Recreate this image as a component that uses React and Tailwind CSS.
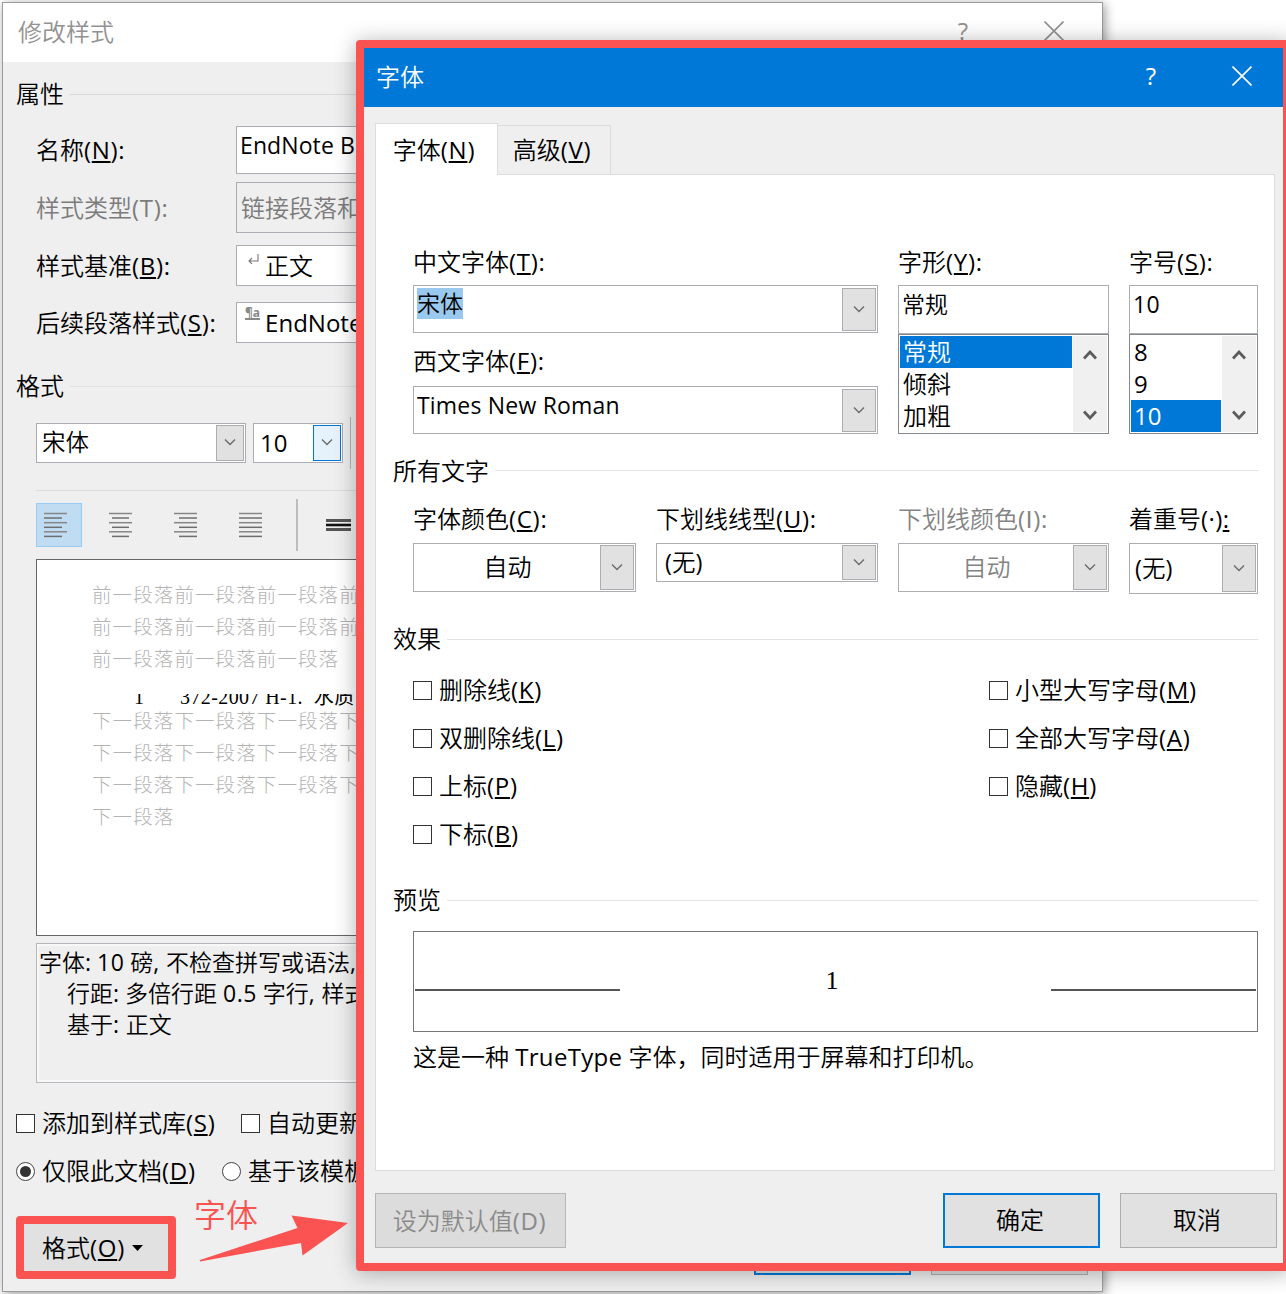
import { clsx } from "clsx"

const alignIcons = [
    { name: "left", short: [0, 18] },
    { name: "center", short: [3, 20] },
    { name: "right", short: [5, 23] },
    { name: "justify", short: [0, 23] },
]

const leftEffects = [
    ["删除线", "K"],
    ["双删除线", "L"],
    ["上标", "P"],
    ["下标", "B"],
]

const rightEffects = [
    ["小型大写字母", "M"],
    ["全部大写字母", "A"],
    ["隐藏", "H"],
]

function Hot({ text, letter, colon = true, plain }) {
    return (
        <span className="whitespace-nowrap">
            {text}
            <span className="font-normal tracking-[0.7px]">
                (<span className={clsx(!plain && "underline decoration-[1.5px] underline-offset-2", letter == "I" && "font-['Liberation_Sans',sans-serif]")}>{letter}</span>){colon && ":"}
            </span>
        </span>
    )
}

function Chevron({ up, bold }) {
    return (
        <svg width="14" height="10" viewBox="0 0 14 10" fill="none" stroke={bold ? "#5c5c5c" : "#6b6b6b"} strokeWidth={bold ? 2.8 : 1.4}>
            <path d={up ? "M1 8.5 L7 2 L13 8.5" : bold ? "M1 1.5 L7 8 L13 1.5" : "M2 2.5 L7 7.5 L12 2.5"} />
        </svg>
    )
}

function DropButton({ active, className }) {
    return (
        <div className={clsx("flex shrink-0 items-center justify-center border pb-[2px]", active ? "border-[#0078d7] bg-[#e5f1fb]" : "border-[#adadad] bg-[#e1e1e1]", className)}>
            <Chevron />
        </div>
    )
}

function Section({ title, className, line = "bg-[#e2e2e2]" }) {
    return (
        <div className={clsx("flex items-center gap-[6px]", className)}>
            <span className="whitespace-nowrap">{title}</span>
            <div className={clsx("h-px flex-1", line)} />
        </div>
    )
}

function Check({ text, letter }) {
    return (
        <div className="flex h-6 items-center gap-[7px]">
            <div className="h-[19px] w-[19px] shrink-0 border-[1.5px] border-[#333] bg-white" />
            <Hot text={text} letter={letter} colon={false} />
        </div>
    )
}

function AlignIcon({ short }) {
    return (
        <svg width="23" height="26" viewBox="0 0 23 26" strokeWidth="1.5">
            {[1.5, 6, 10.7, 15.3, 19.8, 24.4].map((y, i) => (
                <line key={y} x1={i % 2 ? short[0] : 0} x2={i % 2 ? short[1] : 23} y1={y} y2={y} stroke={i % 2 ? "#6e6e6e" : "#868686"} />
            ))}
        </svg>
    )
}

function CloseIcon({ color }) {
    return (
        <svg width="20" height="20" viewBox="0 0 20 20" stroke={color} strokeWidth="1.6">
            <path d="M0.5 0.5 L19.5 19.5 M19.5 0.5 L0.5 19.5" />
        </svg>
    )
}

function ListBox({ items, selected, className }) {
    return (
        <div className={clsx("flex h-[100px] border border-[#828790] bg-white p-px", className)}>
            <div className="flex-1">
                {items.map(item => (
                    <div key={item} className={clsx("flex h-8 items-center pl-[3px]", item == selected && "bg-[#0078d7] text-white")}>{item}</div>
                ))}
            </div>
            <div className="ml-px flex w-[34px] flex-col items-center justify-between bg-[#f0f0f0] pb-3 pt-[14px]">
                <Chevron up bold />
                <Chevron bold />
            </div>
        </div>
    )
}

function StyleDialog() {
    return (
        <div className="absolute left-[2px] top-[2px] h-[1290px] w-[1101px] border border-[#9b9b9b] bg-[#efefef] shadow-[2px_2px_10px_rgba(0,0,0,0.4)]">
            <div className="flex h-[59px] items-center bg-white pl-[15px] text-[#929292]">
                <span className="flex-1 pb-px">修改样式</span>
                <span className="mr-[76px] pb-1 font-normal">?</span>
                <span className="mr-[38px] pb-1"><CloseIcon color="#929292" /></span>
            </div>

            <div className="w-[500px] pl-[13px]">
                <Section title="属性" className="h-16" line="bg-[#d9d9d9]" />
                <div className="flex flex-col pl-5">
                    <div className="flex h-12 items-center">
                        <div className="w-[200px] shrink-0"><Hot text="名称" letter="N" /></div>
                        <div className="h-full flex-1 whitespace-nowrap border border-[#abadb3] bg-white pl-[3px] text-[23px] font-normal leading-[37px] tracking-[0.1px]">EndNote Bi</div>
                    </div>
                    <div className="mt-2 flex h-[51px] items-center text-[#7b7b7b]">
                        <div className="w-[200px] shrink-0"><Hot text="样式类型" letter="T" plain /></div>
                        <div className="flex h-full flex-1 items-center whitespace-nowrap border border-[#abadb3] pl-1 text-[24px]">链接段落和</div>
                    </div>
                    <div className="mt-3 flex h-[41px] items-center">
                        <div className="w-[200px] shrink-0"><Hot text="样式基准" letter="B" /></div>
                        <div className="flex h-full flex-1 items-center border border-[#abadb3] bg-white pl-[11px]">
                            <svg className="mb-[14px] mr-[6px]" width="11" height="10" viewBox="0 0 11 10" fill="none" stroke="#777" strokeWidth="1.1">
                                <path d="M10 0 V7 H1 M4 4 L1 7 L4 10" />
                            </svg>
                            正文
                        </div>
                    </div>
                    <div className="mt-4 flex h-[41px] items-center">
                        <div className="w-[200px] shrink-0"><Hot text="后续段落样式" letter="S" /></div>
                        <div className="flex h-full flex-1 items-center whitespace-nowrap border border-[#abadb3] bg-white pl-2 font-normal">
                            <span className="mb-[18px] mr-[5px] border-b-2 border-[#888] text-[12px] font-bold leading-[11px] text-[#888]">¶a</span>
                            EndNote
                        </div>
                    </div>
                </div>

                <Section title="格式" className="h-20 pt-[6px]" />
                <div className="flex flex-col pl-5">
                    <div className="flex h-10 items-center">
                        <div className="flex h-full w-[210px] items-center justify-between border border-[#abadb3] bg-white p-px pl-[5px] text-[23.5px]">
                            宋体
                            <DropButton className="h-full w-7" />
                        </div>
                        <div className="ml-[7px] flex h-full w-[90px] items-center justify-between border border-[#abadb3] bg-white p-px pl-[6px] font-normal">
                            10
                            <DropButton active className="h-full w-7" />
                        </div>
                        <div className="ml-[7px] h-[52px] w-px shrink-0 bg-[#b5b5b5]" />
                    </div>
                    <div className="mt-[27px] h-px bg-[#dcdcdc]" />
                    <div className="mt-[11px] flex h-[45px] items-center">
                        {alignIcons.map((icon, i) => (
                            <div key={icon.name} className={clsx("mr-[19px] flex h-[44px] w-[46px] items-center border pl-[7px]", i == 0 ? "border-[#99ccf3] bg-[#c0dcf3]" : "border-transparent")}>
                                <AlignIcon short={icon.short} />
                            </div>
                        ))}
                        <div className="h-[52px] w-[2px] bg-[#bdbdbd]" />
                        <svg className="ml-7" width="25" height="12" viewBox="0 0 25 12">
                            <path d="M0 1.5 H25 M0 10.5 H25" stroke="#555" strokeWidth="3" />
                            <path d="M0 6 H25" stroke="#111" strokeWidth="2.6" />
                        </svg>
                    </div>

                    <div className="mt-3 h-[377px] whitespace-nowrap border border-[#666] bg-white pl-[55px] pt-5 font-['Liberation_Serif','Noto_Sans_CJK_SC',serif] text-[19.5px] font-light leading-8 tracking-[1.1px] text-[#b4b4b4]">
                        <p>前一段落前一段落前一段落前</p>
                        <p>前一段落前一段落前一段落前</p>
                        <p>前一段落前一段落前一段落</p>
                        <div className="-mb-[2px] mt-[18px] flex h-[14px] items-end overflow-hidden pl-[42px] font-normal text-[20px] tracking-[0.4px] text-black">
                            <span className="h-[22px] w-[46px] leading-[22px]">1</span>
                            <span className="h-[22px] leading-[22px]">372-2007 H-1.&nbsp; 水质</span>
                        </div>
                        <p>下一段落下一段落下一段落下</p>
                        <p>下一段落下一段落下一段落下</p>
                        <p>下一段落下一段落下一段落下</p>
                        <p>下一段落</p>
                    </div>

                    <div className="mt-[7px] h-[140px] whitespace-nowrap border border-[#b5b7bd] pl-[2px] pt-[3px] text-[23px] leading-[31px] shadow-[inset_0_0_0_2px_#f8f8f8]">
                        <p>字体<span className="font-normal">: <span className="tracking-[0.5px]">10</span></span> 磅<span className="font-normal tracking-[0.4px]">, </span>不检查拼写或语法<span className="font-normal">,</span></p>
                        <p className="pl-7">行距<span className="font-normal">: </span>多倍行距 <span className="font-normal tracking-[0.5px]">0.5</span> 字行<span className="font-normal tracking-[0.4px]">, </span>样式</p>
                        <p className="pl-7">基于<span className="font-normal tracking-[0.4px]">: </span>正文</p>
                    </div>
                </div>

                <div className="mt-7 flex whitespace-nowrap">
                    <div className="w-[225px]"><Check text="添加到样式库" letter="S" /></div>
                    <div className="flex h-6 items-center gap-[7px]">
                        <div className="h-[19px] w-[19px] border-[1.5px] border-[#333] bg-white" />
                        自动更新
                    </div>
                </div>
                <div className="mt-6 flex h-6 items-center whitespace-nowrap">
                    <div className="mr-[7px] flex h-[19px] w-[19px] items-center justify-center rounded-full border-[1.5px] border-[#444] bg-white">
                        <div className="h-[11px] w-[11px] rounded-full bg-[#333]" />
                    </div>
                    <div className="w-[180px]"><Hot text="仅限此文档" letter="D" colon={false} /></div>
                    <div className="mr-[7px] h-[19px] w-[19px] shrink-0 rounded-full border-[1.5px] border-[#444] bg-white" />
                    基于该模板
                </div>
                <div className="mt-[33px] flex">
                    <div className="flex h-[63px] w-[160px] items-center gap-[7px] rounded-[4px] border-8 border-[#fb5252] bg-[#e1e1e1] pl-[18px]">
                        <Hot text="格式" letter="O" colon={false} />
                        <svg width="11" height="6" viewBox="0 0 11 6"><path d="M0 0 H11 L5.5 6 Z" /></svg>
                    </div>
                </div>
            </div>
            <div className="absolute bottom-[16px] right-[14px] flex gap-5">
                <div className="h-[55px] w-[157px] border-2 border-[#0078d7] bg-[#e1e1e1]" />
                <div className="h-[55px] w-[157px] border border-[#adadad] bg-[#e1e1e1]" />
            </div>
        </div>
    )
}

function FontDialog() {
    return (
        <div className="absolute left-[356px] top-[40px] flex h-[1231px] w-[935px] flex-col rounded-[4px] border-8 border-[#fb5252] bg-[#efefef] shadow-[0_2px_22px_rgba(0,0,0,0.3)]">
            <div className="flex h-[59px] shrink-0 items-center bg-[#0078d7] pb-[3px] pl-3 text-white">
                <span className="flex-1 pt-px">字体</span>
                <span className="mr-[76px] font-normal">?</span>
                <span className="mr-[31px]"><CloseIcon color="#fff" /></span>
            </div>

            <div className="mt-4 flex h-[51px] items-end pl-[11px]">
                <div className="z-10 -mb-px flex h-[52px] w-[123px] items-center justify-center border border-b-0 border-[#dcdcdc] bg-white pr-[5px]"><Hot text="字体" letter="N" colon={false} /></div>
                <div className="flex h-[49px] w-[113px] items-center justify-center border border-b-0 border-l-0 border-[#dcdcdc] pr-1"><Hot text="高级" letter="V" colon={false} /></div>
            </div>

            <div className="ml-[11px] h-[997px] w-[900px] border border-[#dcdcdc] bg-white pl-[17px] pr-4">
                <div className="flex gap-5 pl-5 pt-[74px]">
                    <div className="w-[465px]">
                        <div className="flex h-[36px] items-center pb-[11px]"><Hot text="中文字体" letter="T" /></div>
                        <div className="flex h-12 justify-between border border-[#abadb3] p-px pl-[3px] pt-[2px]">
                            <span className="h-[31px] bg-[#99c9ef] text-[23px] leading-[30px]">宋体</span>
                            <DropButton className="h-[43px] w-[34px]" />
                        </div>
                        <div className="flex h-[53px] items-center pt-[3px]"><Hot text="西文字体" letter="F" /></div>
                        <div className="flex h-12 justify-between border border-[#abadb3] p-px pl-[3px] pt-[2px]">
                            <span className="text-[23px] font-normal leading-[33px] tracking-[0.2px]">Times New Roman</span>
                            <DropButton className="h-[43px] w-[34px]" />
                        </div>
                    </div>
                    <div className="w-[211px]">
                        <div className="flex h-[36px] items-center pb-[11px]"><Hot text="字形" letter="Y" /></div>
                        <div className="h-[49px] border border-[#abadb3] pl-[3px] text-[23px] leading-[37px]">常规</div>
                        <ListBox items={["常规", "倾斜", "加粗"]} selected="常规" />
                    </div>
                    <div className="w-[129px]">
                        <div className="flex h-[36px] items-center pb-[11px]"><Hot text="字号" letter="S" /></div>
                        <div className="h-[49px] border border-[#abadb3] pl-[3px] text-[23px] font-normal leading-[36px] tracking-[0.3px]">10</div>
                        <ListBox items={["8", "9", "10"]} selected="10" className="font-normal" />
                    </div>
                </div>

                <Section title="所有文字" className="h-[73px]" />

                <div className="flex gap-5 pl-5">
                    <div className="w-[223px]">
                        <div className="flex h-[36px] items-center pb-[12px]"><Hot text="字体颜色" letter="C" /></div>
                        <div className="flex h-[49px] justify-between border border-[#abadb3] p-px">
                            <span className="flex flex-1 items-center justify-center pb-[2px]">自动</span>
                            <DropButton className="h-full w-[34px]" />
                        </div>
                    </div>
                    <div className="w-[222px]">
                        <div className="flex h-[36px] items-center pb-[12px]"><Hot text="下划线线型" letter="U" /></div>
                        <div className="flex h-[39px] items-center justify-between border border-[#abadb3] p-px pl-2">
                            <span className="text-[23.5px]"><span className="font-normal">(</span>无<span className="font-normal">)</span></span>
                            <DropButton className="h-full w-[34px]" />
                        </div>
                    </div>
                    <div className="w-[211px] text-[#838383]">
                        <div className="flex h-[36px] items-center pb-[12px]"><Hot text="下划线颜色" letter="I" plain /></div>
                        <div className="flex h-[49px] justify-between border border-[#abadb3] p-px">
                            <span className="flex flex-1 items-center justify-center pb-[2px]">自动</span>
                            <DropButton className="h-full w-[34px]" />
                        </div>
                    </div>
                    <div className="w-[129px]">
                        <div className="flex h-[36px] items-center whitespace-nowrap pb-[12px]">着重号<span className="font-normal tracking-[0.4px]">(·)<span className="underline decoration-[1.5px] underline-offset-2">:</span></span></div>
                        <div className="flex h-[51px] items-center justify-between border border-[#abadb3] p-px pl-[5px]">
                            <span className="text-[23.5px]"><span className="font-normal">(</span>无<span className="font-normal">)</span></span>
                            <DropButton className="h-full w-[34px]" />
                        </div>
                    </div>
                </div>

                <Section title="效果" className="mt-[33px] h-6" />
                <div className="mt-[27px] flex h-[168px] pl-5">
                    <div className="flex w-[576px] flex-col gap-6">
                        {leftEffects.map(([text, letter]) => <Check key={letter} text={text} letter={letter} />)}
                    </div>
                    <div className="flex flex-col gap-6">
                        {rightEffects.map(([text, letter]) => <Check key={letter} text={text} letter={letter} />)}
                    </div>
                </div>

                <Section title="预览" className="mt-[42px] h-6" />
                <div className="ml-5 mt-[19px] flex h-[101px] items-start justify-between border border-[#767676] px-px pt-[36px] font-['Liberation_Serif',serif]">
                    <div className="mt-[21px] h-[1.5px] w-[205px] bg-[#555]" />
                    <span className="pr-[7px] text-[26px] font-normal leading-[26px]">1</span>
                    <div className="mt-[21px] h-[1.5px] w-[205px] bg-[#555]" />
                </div>
                <p className="ml-5 mt-[7px] whitespace-nowrap leading-9">这是一种 <span className="font-normal tracking-[0.3px]">TrueType</span> 字体，同时适用于屏幕和打印机。</p>
            </div>

            <div className="mt-[22px] flex h-[55px] pl-[11px]">
                <div className="flex w-[191px] items-center justify-center border border-[#b5b5b5] bg-[#dcdcdc] pr-[2px] text-[#8a8a8a]"><Hot text="设为默认值" letter="D" colon={false} plain /></div>
                <div className="ml-[377px] flex w-[157px] items-center justify-center border-2 border-[#0078d7] bg-[#e1e1e1] pb-px pr-[3px]">确定</div>
                <div className="ml-5 flex w-[157px] items-center justify-center border border-[#adadad] bg-[#e1e1e1] pb-px pr-[3px]">取消</div>
            </div>
        </div>
    )
}

export default function App() {
    return (
        <div className="relative h-[1294px] w-[1286px] overflow-hidden bg-white font-['Open_Sans','Noto_Sans_CJK_SC',sans-serif] text-[24px] font-[350] leading-none text-black">
            <StyleDialog />
            <FontDialog />
            <span className="absolute left-[194px] top-[1199px] text-[32px] text-[#fb5252]">字体</span>
            <svg className="absolute left-[198px] top-[1212px]" width="154" height="52" viewBox="198 1212 154 52" fill="#fb5252">
                <path d="M200 1260 L297.500 1228 L291.500 1215.500 L348 1223 L302.500 1255.500 L301 1243 L200 1261.500 Z" />
            </svg>
        </div>
    )
}
